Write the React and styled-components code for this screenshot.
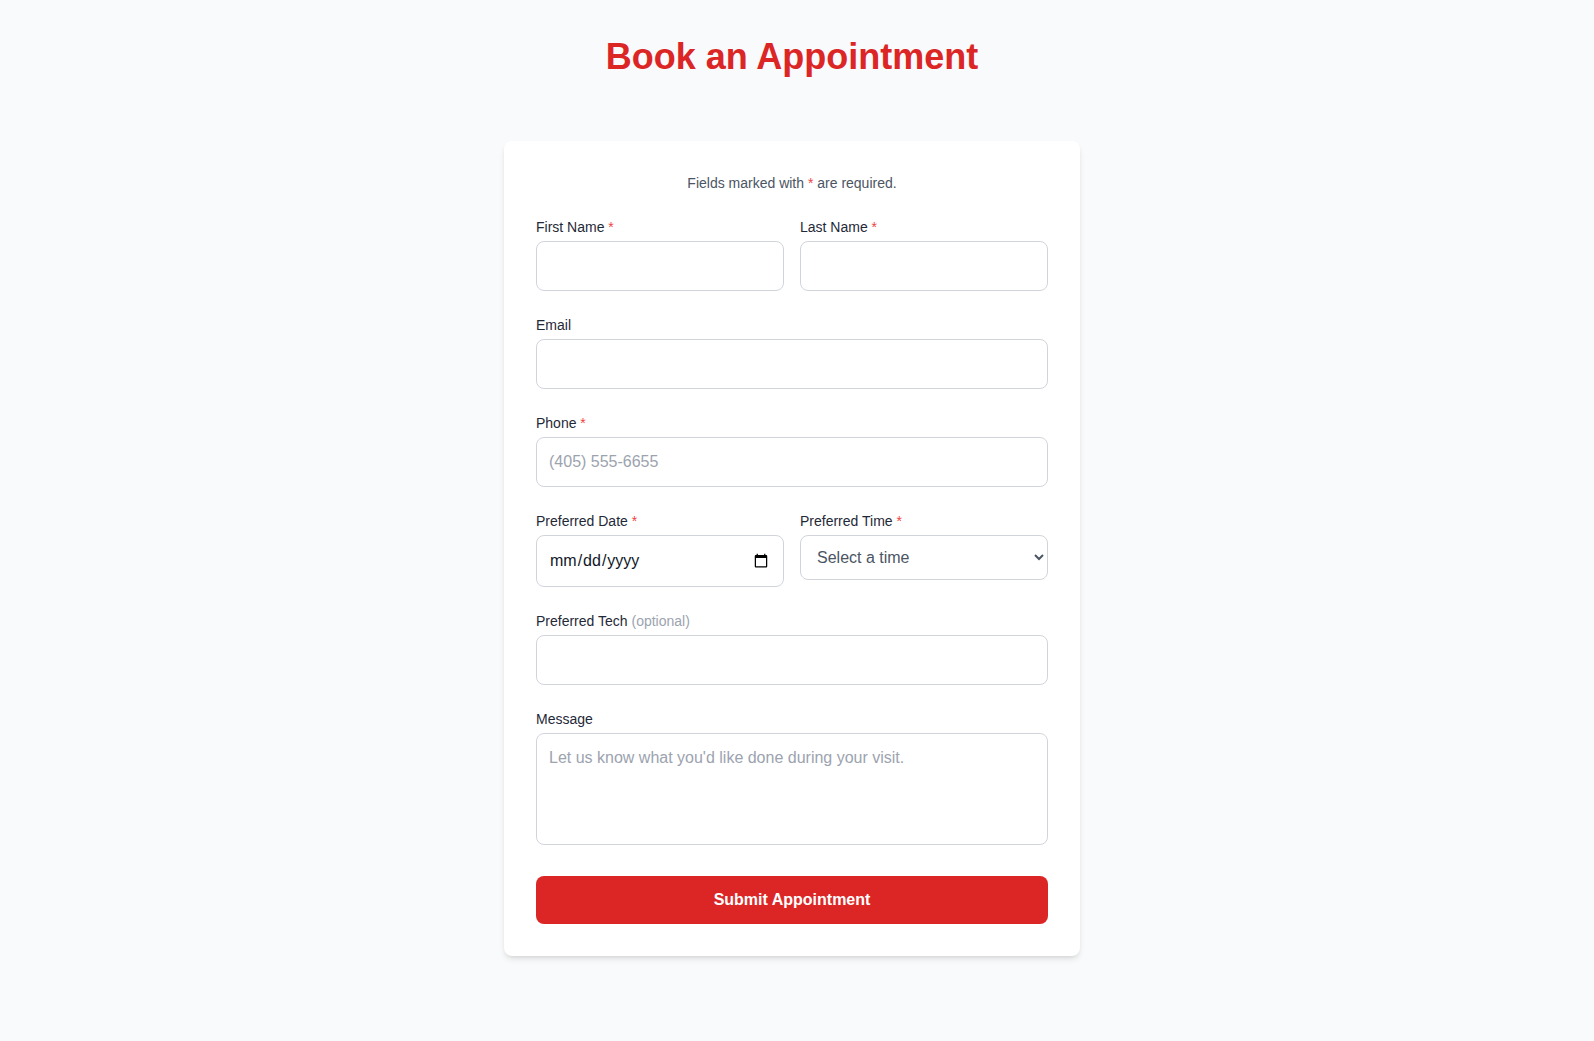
import React from "react";
import styled, { createGlobalStyle } from "styled-components";

const GlobalStyle = createGlobalStyle`
  * {
    box-sizing: border-box;
  }
  html,
  body {
    margin: 0;
    padding: 0;
    background: #f9fafb;
    font-family: "Liberation Sans", Arial, sans-serif;
    line-height: 1.5;
    color: #111827;
  }
`;

const Page = styled.div`
  display: flex;
  flex-direction: column;
  align-items: center;
  padding: 37px 10px 85px 0;
`;

const Title = styled.h1`
  margin: 0 0 64px;
  font-size: 36px;
  line-height: 40px;
  font-weight: 700;
  color: #dc2626;
`;

const Card = styled.form`
  width: 576px;
  background: #ffffff;
  border-radius: 8px;
  padding: 32px;
  box-shadow: 0 4px 6px -1px rgba(0, 0, 0, 0.1), 0 2px 4px -2px rgba(0, 0, 0, 0.1);
  display: flex;
  flex-direction: column;
  gap: 24px;
`;

const Note = styled.p`
  margin: 0;
  text-align: center;
  font-size: 14px;
  line-height: 20px;
  color: #4b5563;
`;

const Row = styled.div`
  display: grid;
  grid-template-columns: 1fr 1fr;
  gap: 16px;
`;

const Field = styled.div`
  display: flex;
  flex-direction: column;
`;

const Label = styled.label`
  font-size: 14px;
  line-height: 20px;
  color: #1f2937;
  margin-bottom: 4px;
`;

const Star = styled.span`
  color: #ef4444;
`;

const Hint = styled.span`
  color: #9ca3af;
`;

const Input = styled.input`
  width: 100%;
  padding: 12px;
  font-family: inherit;
  font-size: 16px;
  line-height: 24px;
  color: #111827;
  background: #ffffff;
  border: 1px solid #d1d5db;
  border-radius: 8px;
  outline: none;
  &::placeholder {
    color: #9ca3af;
  }
`;

const Select = styled.select`
  width: 100%;
  padding: 12px;
  font-family: inherit;
  font-size: 16px;
  line-height: 24px;
  color: #4b5563;
  background: #ffffff;
  border: 1px solid #d1d5db;
  border-radius: 8px;
  outline: none;
`;

const TextArea = styled.textarea`
  width: 100%;
  height: 112px;
  padding: 12px;
  font-family: inherit;
  font-size: 16px;
  line-height: 24px;
  color: #111827;
  background: #ffffff;
  border: 1px solid #d1d5db;
  border-radius: 8px;
  outline: none;
  resize: none;
  display: block;
  &::placeholder {
    color: #9ca3af;
  }
`;

const Submit = styled.button`
  margin-top: 7px;
  width: 100%;
  padding: 12px;
  font-family: inherit;
  font-size: 16px;
  line-height: 24px;
  font-weight: 700;
  color: #ffffff;
  background: #dc2626;
  border: none;
  border-radius: 8px;
  cursor: pointer;
`;

const FormField = ({ label, required, optional, children }) => (
  <Field>
    <Label>
      {label}
      {required && <Star> *</Star>}
      {optional && <Hint> (optional)</Hint>}
    </Label>
    {children}
  </Field>
);

const times = ["9:00 AM", "10:00 AM", "11:00 AM", "12:00 PM", "1:00 PM", "2:00 PM", "3:00 PM", "4:00 PM"];

const App = () => {
  return (
    <Page>
      <GlobalStyle />
      <Title>Book an Appointment</Title>
      <Card onSubmit={(e) => e.preventDefault()}>
        <Note>
          Fields marked with <Star>*</Star> are required.
        </Note>
        <Row>
          <FormField label="First Name" required>
            <Input type="text" />
          </FormField>
          <FormField label="Last Name" required>
            <Input type="text" />
          </FormField>
        </Row>
        <FormField label="Email">
          <Input type="email" />
        </FormField>
        <FormField label="Phone" required>
          <Input type="tel" placeholder="(405) 555-6655" />
        </FormField>
        <Row>
          <FormField label="Preferred Date" required>
            <Input type="date" />
          </FormField>
          <FormField label="Preferred Time" required>
            <Select defaultValue="">
              <option value="">Select a time</option>
              {times.map((t) => (
                <option key={t} value={t}>
                  {t}
                </option>
              ))}
            </Select>
          </FormField>
        </Row>
        <FormField label="Preferred Tech" optional>
          <Input type="text" />
        </FormField>
        <FormField label="Message">
          <TextArea placeholder="Let us know what you'd like done during your visit." />
        </FormField>
        <Submit type="submit">Submit Appointment</Submit>
      </Card>
    </Page>
  );
};

export default App;
